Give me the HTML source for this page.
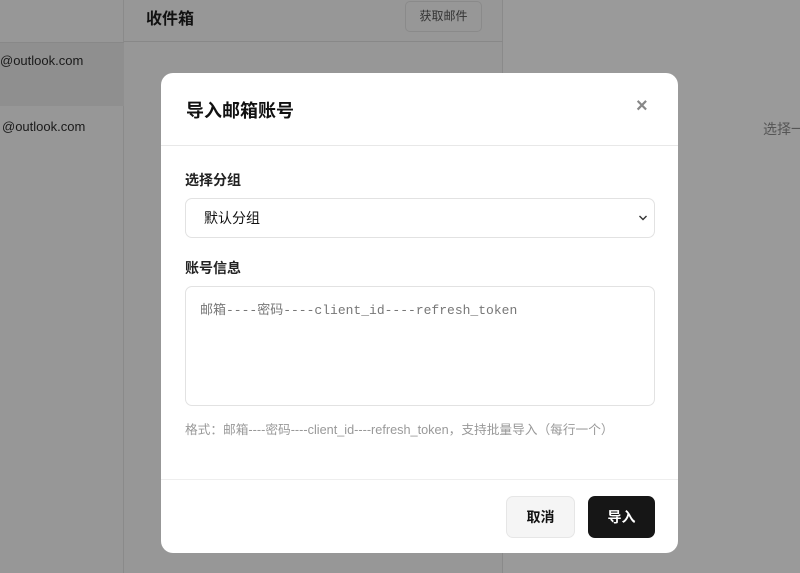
<!DOCTYPE html>
<html><head><meta charset="utf-8"><style>
*{box-sizing:border-box;margin:0;padding:0}
body{width:800px;height:573px;overflow:hidden;background:#9a9a9a;font-family:"Liberation Sans","Noto Sans CJK SC",sans-serif;position:relative}
.abs{position:absolute;white-space:nowrap}
</style></head><body>
<div class="abs" style="left:0;top:0;width:124px;height:573px;background:#979797;border-right:1px solid #8a8a8a"></div>
<div class="abs" style="left:0;top:42px;width:124px;height:64px;background:#8f8f8f;border-top:1px solid #888"></div>
<div class="abs" style="left:0;top:53px;font-size:13px;color:#1a1a1a">@outlook.com</div>
<div class="abs" style="left:2px;top:119px;font-size:13px;color:#1a1a1a">@outlook.com</div>
<div class="abs" style="left:124px;top:0;width:379px;height:573px;background:#979797;border-right:1px solid #8a8a8a"></div>
<div class="abs" style="left:124px;top:41px;width:379px;height:1px;background:#888"></div>
<div class="abs" style="left:146px;top:5px;font-size:16px;font-weight:bold;color:#111">收件箱</div>
<div class="abs" style="left:405px;top:1px;width:77px;height:31px;border:1px solid #8a8a8a;border-radius:5px;font-size:12px;color:#333;text-align:center;line-height:29px">获取邮件</div>
<div class="abs" style="left:763px;top:119px;font-size:14px;color:#555">选择一</div>

<div class="abs" style="left:161px;top:73px;width:517px;height:480px;background:#fff;border-radius:12px;overflow:hidden">
  <div class="abs" style="left:25px;top:24px;font-size:18px;font-weight:bold;color:#111">导入邮箱账号</div>
  <div class="abs" style="left:475px;top:22px;font-size:20px;font-weight:bold;color:#888">×</div>
  <div class="abs" style="left:0;top:72px;width:517px;height:1px;background:#e8e8e8"></div>
  <div class="abs" style="left:24px;top:97px;font-size:14px;font-weight:bold;color:#222">选择分组</div>
  <div class="abs" style="left:24px;top:125px;width:470px;height:40px;border:1px solid #e2e2e2;border-radius:7px;font-size:14px;color:#111;padding-left:18px;line-height:38px">默认分组
    <svg class="abs" style="right:6px;top:15px" width="10" height="8" viewBox="0 0 10 8"><path d="M1.5 2l3.5 3.5L8.5 2" stroke="#333" stroke-width="1.4" fill="none"/></svg></div>
  <div class="abs" style="left:24px;top:185px;font-size:14px;font-weight:bold;color:#222">账号信息</div>
  <div class="abs" style="left:24px;top:213px;width:470px;height:120px;border:1px solid #e2e2e2;border-radius:7px;font-family:'Liberation Mono','Noto Sans CJK SC',monospace;font-size:13px;color:#777;padding:12px 14px">邮箱----密码----client_id----refresh_token</div>
  <div class="abs" style="left:24px;top:346px;font-size:12.7px;color:#999">格式：邮箱----密码----client_id----refresh_token，支持批量导入（每行一个）</div>
  <div class="abs" style="left:0;top:406px;width:517px;height:1px;background:#eee"></div>
  <div class="abs" style="left:345px;top:423px;width:69px;height:42px;background:#f5f5f5;border:1px solid #e6e6e6;border-radius:7px;font-size:14px;font-weight:bold;color:#111;text-align:center;line-height:40px">取消</div>
  <div class="abs" style="left:427px;top:423px;width:67px;height:42px;background:#161616;border-radius:7px;font-size:14px;font-weight:bold;color:#fff;text-align:center;line-height:42px">导入</div>
</div>
</body></html>
